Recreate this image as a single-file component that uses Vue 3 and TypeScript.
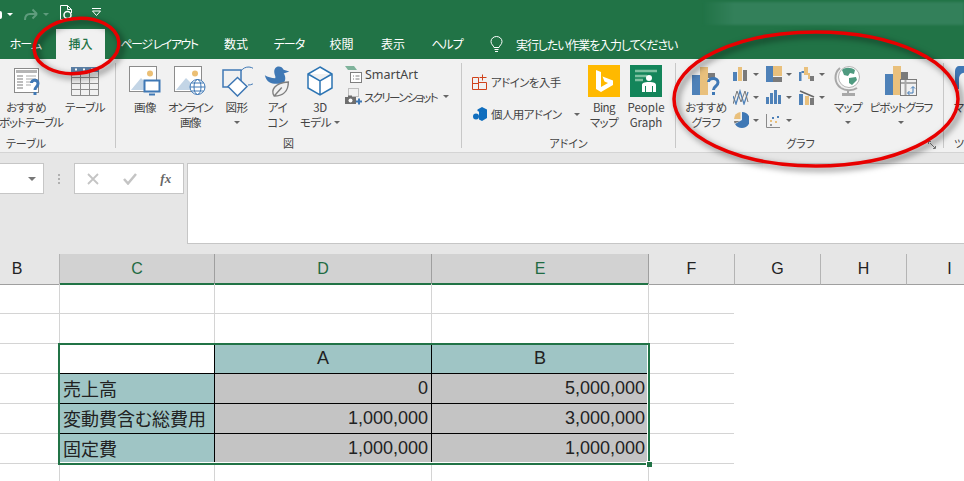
<script setup lang="ts">
interface Tab { label: string; width: number; active?: boolean; cls?: string }
const tabs: Tab[] = [
  { label: 'ホーム', width: 56, cls: 'tab-home' },
  { label: '挿入', width: 49, active: true },
  { label: 'ページ レイアウト', width: 108, cls: 'tab-long' },
  { label: '数式', width: 46 },
  { label: 'データ', width: 60, cls: 'tab-kana' },
  { label: '校閲', width: 45 },
  { label: '表示', width: 58 },
  { label: 'ヘルプ', width: 50, cls: 'tab-kana' },
]
const columns = [
  { name: 'B', active: false },
  { name: 'C', active: true },
  { name: 'D', active: true },
  { name: 'E', active: true },
  { name: 'F', active: false },
  { name: 'G', active: false },
  { name: 'H', active: false },
  { name: 'I', active: false },
]
interface Row { c: string; d: string; e: string; kind: string }
const rows: Row[] = [
  { c: '', d: '', e: '', kind: 'blank' },
  { c: '', d: '', e: '', kind: 'blank' },
  { c: '', d: 'A', e: 'B', kind: 'head' },
  { c: '売上高', d: '0', e: '5,000,000', kind: 'data' },
  { c: '変動費含む総費用', d: '1,000,000', e: '3,000,000', kind: 'data' },
  { c: '固定費', d: '1,000,000', e: '1,000,000', kind: 'data' },
  { c: '', d: '', e: '', kind: 'blank' },
]
</script>

<template>
  <div class="window">
    <header class="titlebar">
      <span class="qat-clip"></span>
      <span class="caret white qat-c1"></span>
      <svg class="qat-redo" width="16" height="14" viewBox="0 0 16 14"><path d="M14 6 9.500 1.500M14 6 9.500 10.500M14 6H7C4 6 2 8 2 12" fill="none" stroke="#5f9c7d" stroke-width="2"/></svg>
      <span class="caret dim qat-c2"></span>
      <svg class="qat-doc" width="15" height="16" viewBox="0 0 15 16"><path d="M1.500 14.500V.5H8.500L12.500 4.500V8M8.500.5V4.500H12.500M1.500 14.500H5" fill="none" stroke="#fff"/><circle cx="8.500" cy="10" r="3.500" fill="none" stroke="#fff" stroke-width="1.500"/><path d="M11 12.500 13.500 15" stroke="#fff" stroke-width="1.500"/></svg>
      <svg class="qat-more" width="9" height="8" viewBox="0 0 9 8"><path d="M0 .5H9" stroke="#fff"/><path d="M.5 3H8.500L4.500 7.500Z" fill="none" stroke="#fff"/></svg>
      <div class="title-blur"></div>
    </header>

    <nav class="tabs">
      <div v-for="t in tabs" :key="t.label" class="tab" :class="[{ active: t.active }, t.cls]" :style="{ width: t.width + 'px' }">{{ t.label }}</div>
      <svg class="bulb" width="13" height="17" viewBox="0 0 13 17"><path d="M4 11.500C3.500 9.500 1 8.500 1 5.500A5.500 5 0 0 1 12 5.500C12 8.500 9.500 9.500 9 11.500ZM4.500 13.500H8.500M5 15.500H8" fill="none" stroke="#fff"/></svg>
      <div class="tell">実行したい作業を入力してください</div>
    </nav>

    <section class="ribbon">
      <!-- テーブル -->
      <div class="group g-table">
        <div class="body">
          <div class="tool w72">
            <svg class="ico" width="30" height="32" viewBox="0 0 30 32"><rect x="3.500" y="3.500" width="24" height="24" fill="#fff" stroke="#8a8a8a"/><rect x="5" y="5" width="21" height="3" fill="#b5b5b5"/><path d="M6 11H12M6 14H12M6 17H12M6 20H12M6 23H12" stroke="#a8a8a8" stroke-width="1.500"/><path d="M15 11H25M15 14H25M15 17H21M15 20H20" stroke="#c6c6c6" stroke-width="1.500"/><path d="M20.500 18C20.500 14.500 27 14 27 18.500C27 22 24 21.500 24 25M24 27V30" fill="none" stroke="#3f78b5" stroke-width="3"/></svg>
            <div class="lbl tight1">おすすめ<br>ピボットテーブル</div>
          </div>
          <div class="tool w46">
            <svg class="ico" width="30" height="32" viewBox="0 0 30 32"><rect x="1" y="2" width="28" height="5" fill="#5b7fa5"/><path d="M5 3.500h2v2H5zM13 3.500h2v2h-2zM21 3.500h2v2h-2z" fill="#fff"/><path d="M1.500 7V30.500H28.500V7M1.500 12.500H28.500M1.500 18.500H28.500M1.500 24.500H28.500M10.500 7V30.500M19.500 7V30.500" fill="none" stroke="#8c8c8c"/></svg>
            <div class="lbl">テーブル</div>
          </div>
        </div>
        <div class="glabel">テーブル</div>
      </div>

      <!-- 図 -->
      <div class="group g-figure">
        <div class="body">
          <div class="tool w40">
            <svg class="ico" width="32" height="32" viewBox="0 0 32 32"><rect x=".5" y="1.500" width="27" height="25" fill="#fff" stroke="#8c8c8c"/><circle cx="21" cy="8.500" r="3" fill="#ebbf75"/><path d="M2 25 12 13 18 19 V25Z" fill="#c3d5e6"/><rect x="15.500" y="15.500" width="15" height="11" fill="#fff" stroke="#3f78b5" stroke-width="2"/><path d="M20 29.500H26" stroke="#3f78b5" stroke-width="2"/></svg>
            <div class="lbl">画像</div>
          </div>
          <div class="tool w50">
            <svg class="ico" width="32" height="32" viewBox="0 0 32 32"><rect x=".5" y="1.500" width="27" height="25" fill="#fff" stroke="#8c8c8c"/><circle cx="21" cy="8.500" r="3" fill="#ebbf75"/><path d="M2 25 12 13 18 19 V25Z" fill="#c3d5e6"/><circle cx="23.500" cy="22" r="7.500" fill="#fff" stroke="#3f78b5"/><ellipse cx="23.500" cy="22" rx="3.500" ry="7.500" fill="none" stroke="#3f78b5"/><path d="M16 22H31M17.500 18H29.500M17.500 26H29.500" stroke="#3f78b5"/></svg>
            <div class="lbl tight2">オンライン<br>画像</div>
          </div>
          <div class="tool w43">
            <svg class="ico" width="32" height="32" viewBox="0 0 32 32"><path d="M20 6A9 9 0 1 1 27 20" fill="none" stroke="#3f78b5"/><rect x="2" y="5" width="18" height="17" fill="#f1f1f1" stroke="#3f78b5" stroke-width="1.500"/><path d="M16.500 12.500 26 21.500 16.500 31 7 21.500Z" fill="#fff" stroke="#3f78b5" stroke-width="1.500"/></svg>
            <div class="lbl">図形</div>
            <span class="caret below"></span>
          </div>
          <div class="tool w39">
            <svg class="ico" width="30" height="34" viewBox="0 0 30 34"><path d="M1 11C3 19 8 20 13 20H20C24 17 23 11 21 9L27 7 21 5C19 0 11 0 11 7C11 11 13 12 12 14C8 14 4 13 1 11Z" fill="#3f78b5"/><path d="M11 33C7 27 11 19 26 18C26 28 20 33 11 33ZM11 33 19 24" fill="#f1f1f1" stroke="#7f7f7f" stroke-width="1.500"/></svg>
            <div class="lbl">アイ<br>コン</div>
          </div>
          <div class="tool w46">
            <svg class="ico" width="30" height="32" viewBox="0 0 30 32"><path d="M15 2 27 9V23L15 30 3 23V9ZM3 9 15 16 27 9M15 16V30" fill="#fff" stroke="#2c74b3" stroke-width="1.500"/></svg>
            <div class="lbl">3D<br>モデル<span class="caret inline"></span></div>
          </div>
          <div class="stack s-smart">
            <div class="row-item smart">
              <svg width="17" height="17" viewBox="0 0 17 17"><path d="M0 0H9L12 4H3Z" fill="#7fb39b"/><rect x="5.500" y="6.500" width="11" height="10" fill="#fff" stroke="#7f7f7f"/><path d="M8 10h1M8 13h1M10.500 10h4M10.500 13h4" stroke="#7f7f7f"/></svg>
              <span class="latin">SmartArt</span>
            </div>
            <div class="row-item shot">
              <svg width="17" height="17" viewBox="0 0 17 17"><rect x="3.500" y=".5" width="10" height="8" fill="none" stroke="#8a8a8a" stroke-dasharray="1 1"/><rect x="0" y="9" width="11" height="7" fill="#6e6e6e"/><rect x="3" y="7.500" width="4" height="2" fill="#6e6e6e"/><circle cx="5.500" cy="12.500" r="2" fill="#fff"/><path d="M14 10.500V16.500M11 13.500H17" stroke="#3f78b5" stroke-width="2"/></svg>
              <span class="shot-text">スクリーンショット</span>
              <span class="caret"></span>
            </div>
          </div>
        </div>
        <div class="glabel">図</div>
      </div>

      <!-- アドイン -->
      <div class="group g-addin">
        <div class="body">
          <div class="stack s-addin">
            <div class="row-item store">
              <svg width="15" height="16" viewBox="0 0 15 16"><path d="M.5 3.500H6.500V15.500H.5ZM6.500 8.500H14.500V15.500H6.500ZM.5 9.500H6.500M10.500 .5V6.500M7.500 3.500H14.500" fill="none" stroke="#d0421b"/></svg>
              <span class="addin-text">アドインを入手</span>
            </div>
            <div class="row-item mine">
              <svg width="14" height="14" viewBox="0 0 14 14"><path d="M4.500 2.500 9 0 14 2.500V11L9 14V6L4.500 4Z" fill="#106ebe"/><path d="M6 3 9 5.500V14L6 12.500Z" fill="#106ebe"/><circle cx="3" cy="9.500" r="3" fill="#106ebe"/></svg>
              <span class="addin-text">個人用アドイン</span>
              <span class="caret far"></span>
            </div>
          </div>
          <div class="tool w42">
            <div class="tile bing">
              <svg width="32" height="32" viewBox="0 0 32 32"><path d="M8 5 13 7V22L20 18 16.500 16.500 14.500 11.500 25 15.500V20L13 27 8 24Z" fill="#fff"/></svg>
            </div>
            <div class="lbl">Bing<br>マップ</div>
          </div>
          <div class="tool w42">
            <div class="tile people">
              <svg width="32" height="32" viewBox="0 0 32 32"><path d="M5 6H27M5 11H17M5 15H13" stroke="#7cc0a0" stroke-width="2.500"/><circle cx="19" cy="13" r="3" fill="#fff"/><path d="M12 27V20C12 18 14 17 19 17S26 18 26 20V27H23V21H22V27H16V21H15V27Z" fill="#fff"/></svg>
            </div>
            <div class="lbl plain">People<br>Graph</div>
          </div>
        </div>
        <div class="glabel">アドイン</div>
      </div>

      <!-- グラフ -->
      <div class="group g-chart">
        <div class="body">
          <div class="tool w60">
            <svg class="ico" width="30" height="32" viewBox="0 0 30 32"><rect x="1" y="10" width="8" height="20" fill="#4e81b8"/><rect x="9" y="2" width="8" height="28" fill="#e9c07c"/><rect x="17" y="8" width="7" height="5" fill="#7a7a7a"/><path d="M17.500 17C17.500 12.500 27 12 27 17.500C27 21.500 22.500 21 22.500 25M22.500 27V30" fill="none" stroke="#3f78b5" stroke-width="3"/></svg>
            <div class="lbl">おすすめ<br>グラフ</div>
          </div>
          <div class="chart-grid">
            <div class="mini"><svg width="16" height="16" viewBox="0 0 16 16"><rect x="0" y="6" width="4" height="9" fill="#4e81b8"/><rect x="5" y="1" width="4" height="14" fill="#e9c07c"/><rect x="10" y="4" width="4" height="11" fill="#7a7a7a"/></svg><span class="caret"></span></div>
            <div class="mini"><svg width="16" height="16" viewBox="0 0 16 16"><rect x="0" y="0" width="7" height="16" fill="#4e81b8"/><rect x="7" y="0" width="9" height="10" fill="#e9c07c"/><rect x="7" y="11" width="9" height="5" fill="#7a7a7a"/></svg><span class="caret"></span></div>
            <div class="mini"><svg width="16" height="16" viewBox="0 0 16 16"><rect x="0" y="6" width="2.500" height="9" fill="#4e81b8"/><rect x="2.500" y="5" width="3" height="2" fill="#4e81b8"/><rect x="5" y="1" width="4" height="8" fill="#e9c07c"/><rect x="9" y="7" width="2" height="6" fill="#e9c07c"/><rect x="11" y="10" width="4" height="5" fill="#7a7a7a"/></svg><span class="caret"></span></div>
            <div class="mini"><svg width="16" height="16" viewBox="0 0 16 16"><path d="M0 7 3 15 7 2 11 15 15 3" fill="none" stroke="#4e81b8" stroke-width="1.300"/><path d="M0 15 4 2 8 13 12 2 15 13" fill="none" stroke="#7a7a7a"/></svg><span class="caret"></span></div>
            <div class="mini"><svg width="16" height="16" viewBox="0 0 16 16"><rect x="0" y="8" width="3" height="7" fill="#4e81b8"/><rect x="4" y="4" width="3" height="11" fill="#4e81b8"/><rect x="8" y="1" width="3" height="14" fill="#4e81b8"/><rect x="12" y="6" width="3" height="9" fill="#4e81b8"/></svg><span class="caret"></span></div>
            <div class="mini"><svg width="16" height="16" viewBox="0 0 16 16"><rect x="0" y="5" width="4" height="11" fill="#4e81b8"/><rect x="6" y="7" width="4" height="9" fill="#e9c07c"/><rect x="11" y="9" width="4" height="7" fill="#7a7a7a"/><path d="M1 2 8 5 15 8" fill="none" stroke="#666" stroke-width="1.500"/></svg><span class="caret"></span></div>
            <div class="mini"><svg width="16" height="16" viewBox="0 0 16 16"><path d="M9 0A8 8 0 1 1 2 12L9 8Z" fill="#3f78b5"/><path d="M7.500 0A7 7 0 0 0 1 7H7.500Z" fill="#e9c07c"/><path d="M1 9H7L1.500 11.500Z" fill="#7a7a7a"/></svg><span class="caret"></span></div>
            <div class="mini"><svg width="16" height="16" viewBox="0 0 16 16"><path d="M.5 2V15.500H14" fill="none" stroke="#8a8a8a"/><path d="M4 8h2v2H4zM9 9h2v2H9z" fill="#e9c07c"/><path d="M6 5h2v2H6zM11 4h2v2h-2z" fill="#4e81b8"/><path d="M4 12h2v2H4z" fill="#9a9a9a"/></svg><span class="caret"></span></div>
          </div>
          <div class="tool w42 map-tool">
            <svg class="ico" width="30" height="32" viewBox="0 0 30 32"><circle cx="16" cy="12" r="10.500" fill="#fff" stroke="#b5b5b5"/><path d="M9 5C12 2 18 2 22 5L21 9 17 8 15 11 11 10ZM16 13 23 12 24 15 19 20 16 18Z" fill="#4f9a80"/><path d="M7 3A12.500 12.500 0 0 0 8 23" fill="none" stroke="#a8a8a8" stroke-width="2"/><path d="M8 23C12 26 20 26 24 23M15 25V28" fill="none" stroke="#a8a8a8" stroke-width="2"/><rect x="9" y="28" width="13" height="3" fill="#a8a8a8"/></svg>
            <div class="lbl">マップ</div>
            <span class="caret below"></span>
          </div>
          <div class="tool w70 pivot-tool">
            <svg class="ico" width="34" height="32" viewBox="0 0 34 32"><rect x="1" y="9" width="8" height="21" fill="#4e81b8"/><rect x="9" y="1" width="8" height="29" fill="#e9c07c"/><rect x="17" y="7" width="7" height="7" fill="#7a7a7a"/><rect x="16.500" y="14.500" width="16" height="16" fill="#f1f1f1" stroke="#7a7a7a"/><path d="M17 18H32M21.500 15V30" stroke="#a8a8a8" stroke-width="2"/><path d="M24 28H29V22M27 23.500 29 21.500 31 23.500M25.500 26 23.500 28 25.500 30" fill="none" stroke="#3f78b5"/></svg>
            <div class="lbl tight1">ピボットグラフ</div>
            <span class="caret below"></span>
          </div>
        </div>
        <div class="glabel">グラフ</div>
        <svg class="launcher" width="8" height="8" viewBox="0 0 8 8"><path d="M.5 3V.5H3M7.500 5V7.500H5M2 2 7 7" fill="none" stroke="#777"/></svg>
      </div>

      <!-- ツアー -->
      <div class="group g-tour">
        <div class="body">
          <div class="tool tour-tool">
            <svg class="ico" width="22" height="32" viewBox="0 0 22 32"><path d="M1 24V6C1 3 3 1 5 1H18V24Z" fill="#3f78b5"/><path d="M5 24V14C5 9 9 7 12 8L14 24Z" fill="#f1f1f1"/></svg>
            <div class="lbl">マップ</div>
          </div>
        </div>
        <div class="glabel">ツアー</div>
      </div>
    </section>

    <section class="formula">
      <div class="namebox"><span class="caret namecaret"></span></div>
      <div class="dots"><i></i><i></i><i></i></div>
      <div class="fbtns">
        <svg width="12" height="12" viewBox="0 0 12 12"><path d="M1 1 11 11M11 1 1 11" stroke="#c4c4c4" stroke-width="1.800"/></svg>
        <svg width="14" height="12" viewBox="0 0 14 12"><path d="M1 6 5 10.500 13 1" fill="none" stroke="#c4c4c4" stroke-width="2.500"/></svg>
        <span class="fx">fx</span>
      </div>
      <div class="finput"></div>
    </section>

    <section class="sheet">
      <div class="colhead">
        <div v-for="c in columns" :key="c.name" class="hcell" :class="{ on: c.active }">{{ c.name }}</div>
      </div>
      <div class="grid">
        <div v-for="(r, i) in rows" :key="i" class="row" :class="r.kind">
          <div class="cell cb"></div>
          <div class="cell cc lbltext">{{ r.c }}</div>
          <div class="cell cd num">{{ r.d }}</div>
          <div class="cell ce num">{{ r.e }}</div>
          <div class="cell cf"></div>
        </div>
        <div class="selection"><span class="handle"></span></div>
      </div>
    </section>

    <svg class="marks" width="964" height="481" viewBox="0 0 964 481">
      <g fill="none" stroke="#e80000" stroke-width="3.500">
        <ellipse cx="76.500" cy="46" rx="42.500" ry="27.500" transform="rotate(-6 76.500 46)"/>
        <ellipse cx="816" cy="99" rx="142" ry="67"/>
      </g>
    </svg>
  </div>
</template>

<style>
body { margin: 0; }
</style>

<style scoped>
.window {
  position: relative;
  width: 964px;
  height: 481px;
  overflow: hidden;
  background: #fff;
  font-family: "Noto Sans CJK JP", "Noto Sans", sans-serif;
  font-feature-settings: "palt";
  color: #444;
}
.caret {
  display: inline-block;
  width: 0;
  height: 0;
  border-left: 3px solid transparent;
  border-right: 3px solid transparent;
  border-top: 3px solid #666;
  flex: none;
}
.caret.white { border-top-color: #fff; }
.caret.dim { border-top-color: #5f9c7d; }

.titlebar {
  height: 29px;
  background: #217346;
  display: flex;
  align-items: center;
}
.qat-clip { width: 2px; height: 8px; background: #fff; border-radius: 0 4px 4px 0; margin-right: 5px; }
.qat-redo { margin-left: 10px; }
.qat-c2 { margin-left: 4px; }
.qat-doc { margin-left: 10px; margin-top: -4px; }
.qat-more { margin-left: 18px; margin-top: -5px; }
.title-blur {
  margin: -2px 0 0 auto;
  width: 261px;
  height: 23px;
  background: linear-gradient(90deg, #217346 0, #33805a 12%, #33805a 100%);
  filter: blur(1px);
}

.tabs {
  height: 30px;
  background: #217346;
  display: flex;
  align-items: center;
  color: #fff;
  font-size: 12px;
}
.tab { height: 30px; line-height: 29px; text-align: center; white-space: pre; flex: none; }
.tab-home { padding-right: 5px; box-sizing: border-box; letter-spacing: -1px; }
.tab-long { letter-spacing: -1.500px; }
.tab-kana { letter-spacing: -1px; }
.tab.active { background: #f1f1f1; color: #217346; font-weight: 500; }
.bulb { margin-left: 18px; }
.tell { margin-left: 13px; white-space: nowrap; letter-spacing: -1.100px; }

.ribbon {
  height: 94px;
  box-sizing: border-box;
  background: #f1f1f1;
  border-bottom: 1px solid #d4d4d4;
  padding-top: 4px;
  display: flex;
  align-items: flex-start;
}
.group {
  position: relative;
  height: 85px;
  box-sizing: border-box;
  border-right: 1px solid #c8c8c8;
  display: flex;
  flex-direction: column;
  flex: none;
}
.g-table { width: 116px; }
.g-figure { width: 346px; }
.g-addin { width: 214px; }
.g-chart { width: 268px; }
.g-tour { width: 40px; border-right: 0; }
.body { display: flex; align-items: flex-start; padding-top: 2px; flex: 1; }
.g-table .body { margin-left: -10px; }
.g-figure .body { padding-left: 9px; }
.g-addin .body { padding-left: 10px; }
.glabel {
  height: 10px;
  line-height: 10px;
  font-size: 11px;
  text-align: center;
  white-space: nowrap;
}
.g-table .glabel { padding-right: 63px; }
.g-chart .glabel { padding-right: 18px; }
.g-tour .glabel { text-align: left; padding-left: 10px; }
.launcher { position: absolute; right: 7px; bottom: -1px; }

.tool {
  display: flex;
  flex-direction: column;
  align-items: center;
  flex: none;
}
.ico { display: block; height: 32px; }
.lbl {
  margin-top: 3px;
  font-size: 11.500px;
  line-height: 15px;
  text-align: center;
  white-space: nowrap;
  letter-spacing: -.5px;
}
.lbl.plain { letter-spacing: 0; }
.lbl.tight1 { letter-spacing: -1px; }
.lbl.tight2 { letter-spacing: -1.400px; }
.w72 { width: 72px; }
.w46 { width: 46px; }
.w40 { width: 40px; }
.w50 { width: 50px; }
.w43 { width: 43px; }
.w39 { width: 39px; }
.w42 { width: 42px; }
.w60 { width: 60px; }
.w70 { width: 70px; }
.caret.below { margin-top: 6px; }
.caret.inline { margin-left: 3px; vertical-align: 3px; }

.stack { display: flex; flex-direction: column; font-size: 11.500px; white-space: nowrap; }
.row-item { display: flex; align-items: center; }
.s-smart { margin-left: 2px; margin-top: 1px; }
.smart { height: 16px; gap: 3px; }
.latin { font-family: "Noto Sans", sans-serif; font-size: 12.500px; }
.shot { gap: 2px; margin-top: 6px; height: 17px; }
.shot-text { letter-spacing: -1.700px; }
.shot .caret { margin-left: 4px; }
.s-addin { width: 111px; margin-top: 9px; }
.addin-text { letter-spacing: -.6px; }
.store { height: 16px; gap: 4px; }
.mine { height: 16px; gap: 4px; margin-top: 16px; margin-left: 1px; }
.caret.far { margin-left: 9px; }
.tile { width: 32px; height: 32px; }
.tile svg { display: block; }
.bing { background: #ffb900; }
.people { background: #13855a; }

.chart-grid {
  display: grid;
  grid-template-columns: repeat(3, 33px);
  grid-auto-rows: 23px;
  padding-top: 1px;
  margin-left: -3px;
}
.mini { display: flex; align-items: flex-start; gap: 4px; }
.mini .caret { margin-top: 7px; }
.map-tool { margin-left: -5px; }
.pivot-tool { margin-left: -3px; }
.tour-tool { align-items: flex-start; padding-left: 10px; }

.formula {
  height: 101px;
  box-sizing: border-box;
  background: #e6e6e6;
  padding-top: 10px;
  display: flex;
  align-items: flex-start;
}
.namebox {
  width: 44px;
  height: 31px;
  box-sizing: border-box;
  background: #fff;
  border: 1px solid #c6c6c6;
  border-left: 0;
  display: flex;
  align-items: center;
  justify-content: flex-end;
  padding-right: 7px;
  flex: none;
}
.namecaret { border-left-width: 4px; border-right-width: 4px; border-top-width: 4px; border-top-color: #777; }
.dots {
  width: 30px;
  height: 31px;
  display: flex;
  flex-direction: column;
  align-items: center;
  justify-content: center;
  gap: 2px;
  flex: none;
}
.dots i { width: 2px; height: 2px; background: #b0b0b0; display: block; }
.fbtns {
  width: 110px;
  height: 31px;
  box-sizing: border-box;
  background: #fff;
  border: 1px solid #c6c6c6;
  display: flex;
  align-items: center;
  justify-content: space-around;
  flex: none;
}
.fx { font-family: "Liberation Serif", serif; font-style: italic; font-weight: 700; font-size: 13px; color: #666; }
.finput {
  margin-left: 3px;
  flex: 1;
  height: 81px;
  box-sizing: border-box;
  background: #fff;
  border: 1px solid #c6c6c6;
  border-right: 0;
}

.sheet { margin-left: -25px; width: 1017px; }
.colhead {
  display: grid;
  grid-template-columns: 85px 155px 217px 217px 86px 86px 86px 86px;
  height: 30px;
}
.hcell {
  box-sizing: border-box;
  background: #e6e6e6;
  border-right: 1px solid #b4b4b4;
  border-bottom: 1px solid #9f9f9f;
  font-family: "Liberation Sans", sans-serif;
  font-size: 16px;
  line-height: 29px;
  text-align: center;
  color: #222;
}
.hcell.on {
  background: #d2d2d2;
  color: #1f6b43;
  border-bottom: 2px solid #217346;
  border-right-color: #9f9f9f;
}
.grid { position: relative; }
.row {
  display: grid;
  grid-template-columns: 85px 155px 217px 217px 85px;
  height: 30px;
}
.cell {
  box-sizing: border-box;
  border-right: 1px solid #d4d4d4;
  border-bottom: 1px solid #d4d4d4;
  line-height: 29px;
  font-size: 18px;
  color: #222;
  white-space: nowrap;
  overflow: hidden;
}
.cf { border-right: 0; }
.lbltext { padding-left: 3px; }
.num { font-family: "Liberation Sans", sans-serif; text-align: right; padding-right: 3px; }
.head .cd, .head .ce { text-align: center; padding-right: 0; background: #9fc5c5; }
.head .cc, .head .cd, .data .cc, .data .cd { border-right-color: #000; }
.head .cd, .head .ce, .data .cc, .data .cd, .data .ce { border-bottom-color: #000; }
.head .cc { border-bottom-color: #000; background: #fff; }
.data .cc { background: #9fc5c5; }
.data .cd, .data .ce { background: #c4c4c4; }
.selection {
  position: absolute;
  left: 83px;
  top: 59px;
  width: 592px;
  height: 122px;
  box-sizing: border-box;
  border: 2px solid #217346;
  box-shadow: inset -1px -1px 0 #fff;
  pointer-events: none;
}
.handle {
  position: absolute;
  right: -4px;
  bottom: -4px;
  width: 5px;
  height: 5px;
  background: #217346;
  border: 1px solid #fff;
  border-right: 0;
  border-bottom: 0;
}
.marks {
  position: absolute;
  left: 0;
  top: 0;
  pointer-events: none;
  filter: drop-shadow(3px 3px 3px rgba(0, 0, 0, .55));
}
</style>
